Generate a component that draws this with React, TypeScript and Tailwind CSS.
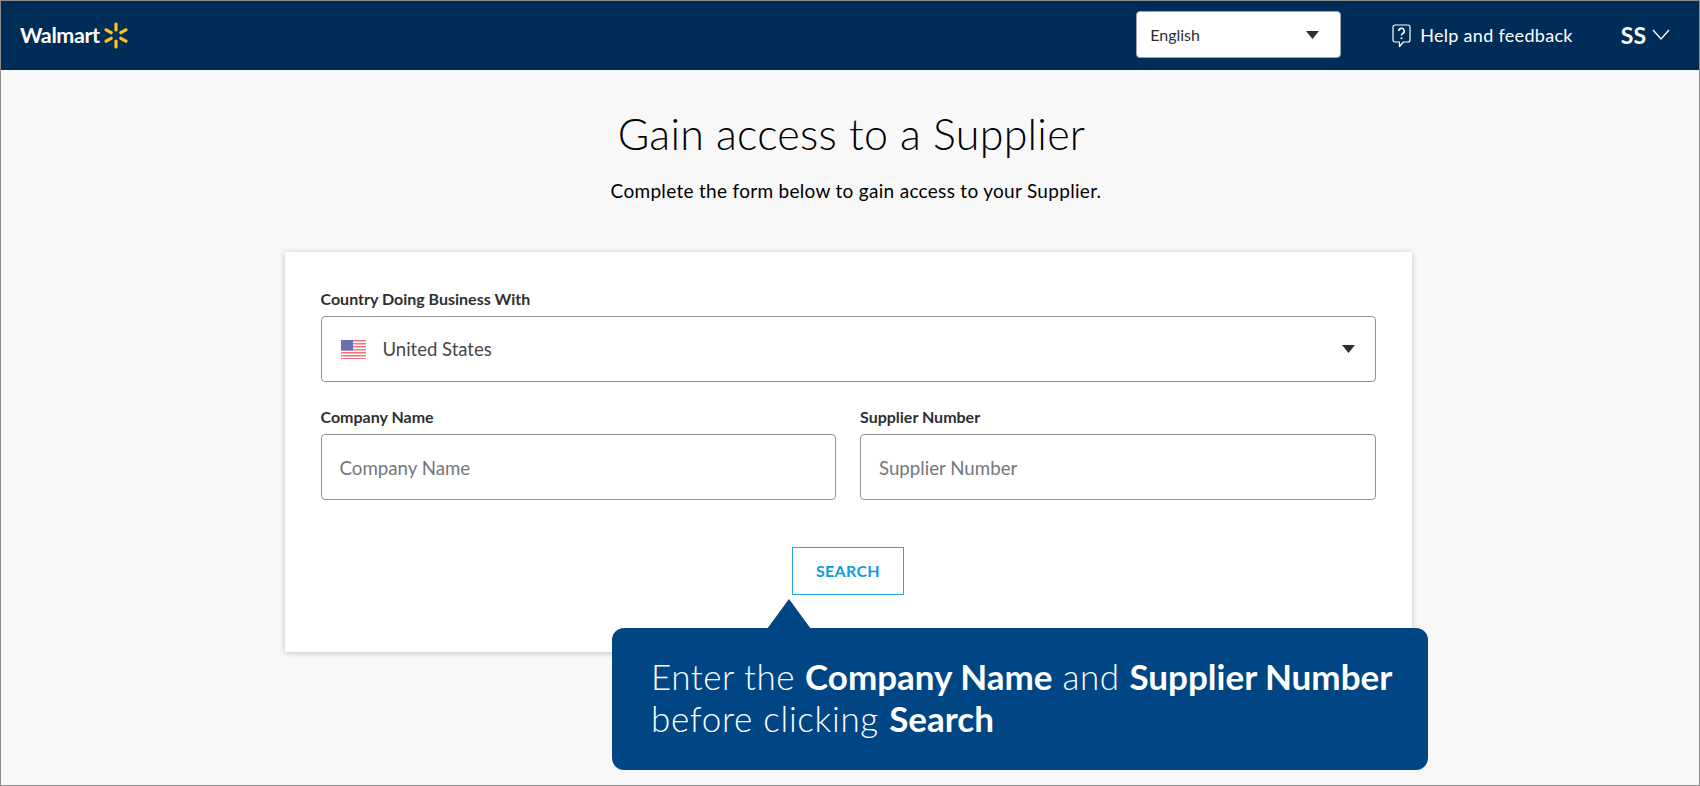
import React from 'react';

const Spark = () => (
  <svg width="24" height="27" viewBox="0 0 24 27" fill="#ffc220">
    <rect x="10.4" y="0.5" width="3.2" height="9" rx="1.6" />
    <rect x="10.4" y="17.5" width="3.2" height="9" rx="1.6" />
    <rect x="10.4" y="0.5" width="3.2" height="9" rx="1.6" transform="rotate(60 12 13.5)" />
    <rect x="10.4" y="0.5" width="3.2" height="9" rx="1.6" transform="rotate(120 12 13.5)" />
    <rect x="10.4" y="0.5" width="3.2" height="9" rx="1.6" transform="rotate(240 12 13.5)" />
    <rect x="10.4" y="0.5" width="3.2" height="9" rx="1.6" transform="rotate(300 12 13.5)" />
  </svg>
);

const HelpIcon = () => (
  <svg width="19" height="24" viewBox="0 0 19 24" fill="none" stroke="#fff" strokeWidth="1.2">
    <path d="M3 1h13a2 2 0 0 1 2 2v13a2 2 0 0 1-2 2h-4.5L7.5 22.5V18H3a2 2 0 0 1-2-2V3a2 2 0 0 1 2-2z" strokeLinejoin="round" />
    <path d="M6.8 7a2.7 2.7 0 1 1 4 2.4c-.9.5-1.3 1-1.3 2.1" strokeWidth="1.6" />
    <circle cx="9.5" cy="14.2" r="1" fill="#fff" stroke="none" />
  </svg>
);

const Caret = () => (
  <svg width="13" height="8" viewBox="0 0 13 8" fill="#2e2f32">
    <path d="M0 0h13L6.5 8z" />
  </svg>
);

const Flag = () => (
  <svg width="25" height="19" viewBox="0 0 25 19">
    <rect width="25" height="19" fill="#fff" />
    {[0, 3, 6, 9, 12, 15, 18].map((y) => (
      <rect key={y} y={y} width="25" height="1.5" fill="#f4727a" />
    ))}
    <rect width="12" height="10.5" fill="#6a6fb0" />
  </svg>
);

const Field: React.FC<{ label: string; placeholder: string }> = ({ label, placeholder }) => (
  <div className="flex-1">
    <div className="text-[16px] leading-[18px] font-bold text-[#2e2f32] mb-[8px]">{label}</div>
    <div className="h-[66px] rounded-[4px] border border-[#909196] bg-white flex items-center px-[18px] pt-[2px] text-[18.7px] text-[#74767c]">
      {placeholder}
    </div>
  </div>
);

export default function App() {
  return (
    <div className="relative h-[786px] border border-[#8c8c8c] bg-[#f8f8f8] font-['Lato',sans-serif] overflow-hidden">
      <header className="h-[69px] bg-[#002d58] flex items-center pl-[19px] pr-[29px] text-white">
        <span className="font-bold text-[21.5px] tracking-[-0.4px]">Walmart</span>
        <span className="ml-[4px]"><Spark /></span>
        <div className="ml-auto mb-[2px] w-[205px] h-[47px] rounded-[4px] bg-white border border-[#9aa3b0] flex items-center justify-between pl-[13px] pr-[21px] text-[16px] text-[#2e2f32]">
          English
          <Caret />
        </div>
        <div className="ml-[51px] flex items-center gap-[9px] text-[18px] tracking-[0.3px]">
          <HelpIcon />
          Help and feedback
        </div>
        <div className="ml-[48px] flex items-center gap-[6px]">
          <span className="font-bold text-[23px] mb-[1px]">SS</span>
          <svg className="mb-[3px]" width="18" height="11" viewBox="0 0 18 11" fill="none" stroke="#fff" strokeWidth="1.3">
            <path d="M1 1l8 9 8-9" />
          </svg>
        </div>
      </header>

      <main className="flex flex-col items-center">
        <h1 className="mt-[39px] ml-[3px] text-[43px] font-light tracking-[0.25px] leading-[50px] text-black">Gain access to a Supplier</h1>
        <p className="mt-[20px] ml-[12px] text-[19px] tracking-[0.3px] leading-[24px] text-black">
          Complete the form below to gain access to your Supplier.
        </p>
        <div className="mt-[49px] mr-[4px] w-[1127px] h-[400px] bg-white shadow-[0_1px_6px_rgba(0,0,0,0.22)] pt-[38px] px-[36px]">
          <div className="text-[16px] leading-[18px] font-bold text-[#2e2f32] mb-[8px]">Country Doing Business With</div>
          <div className="h-[66px] rounded-[4px] border border-[#909196] flex items-center pl-[19px] pr-[20px] text-[18.5px] text-[#46474a]">
            <Flag />
            <span className="ml-[17px] mt-[2px]">United States</span>
            <span className="ml-auto"><Caret /></span>
          </div>
          <div className="mt-[26px] flex gap-[24px]">
            <Field label="Company Name" placeholder="Company Name" />
            <Field label="Supplier Number" placeholder="Supplier Number" />
          </div>
          <div className="mt-[47px] flex justify-center">
            <button className="w-[112px] h-[48px] border border-[#2aa5e3] text-[#0d9ddb] font-bold text-[16px] tracking-[0.3px]">
              SEARCH
            </button>
          </div>
        </div>
      </main>

      {/* callout sits over the card */}
      <div className="absolute left-[611px] top-[627px] w-[816px] h-[142px] rounded-[12px] bg-[#004684] text-white pl-[39px] pt-[27px] text-[35px] font-light leading-[42px] tracking-[0.5px]">
        <svg className="absolute left-[155px] top-[-29px]" width="44" height="30" viewBox="0 0 44 30" fill="#004684">
          <path d="M22 0L44 30H0z" />
        </svg>
        <div>
          Enter the <b className="font-bold tracking-normal">Company Name</b> and <b className="font-bold tracking-normal">Supplier Number</b>
        </div>
        <div className="tracking-[0.7px]">
          before clicking <b className="font-bold tracking-normal">Search</b>
        </div>
      </div>
    </div>
  );
}
